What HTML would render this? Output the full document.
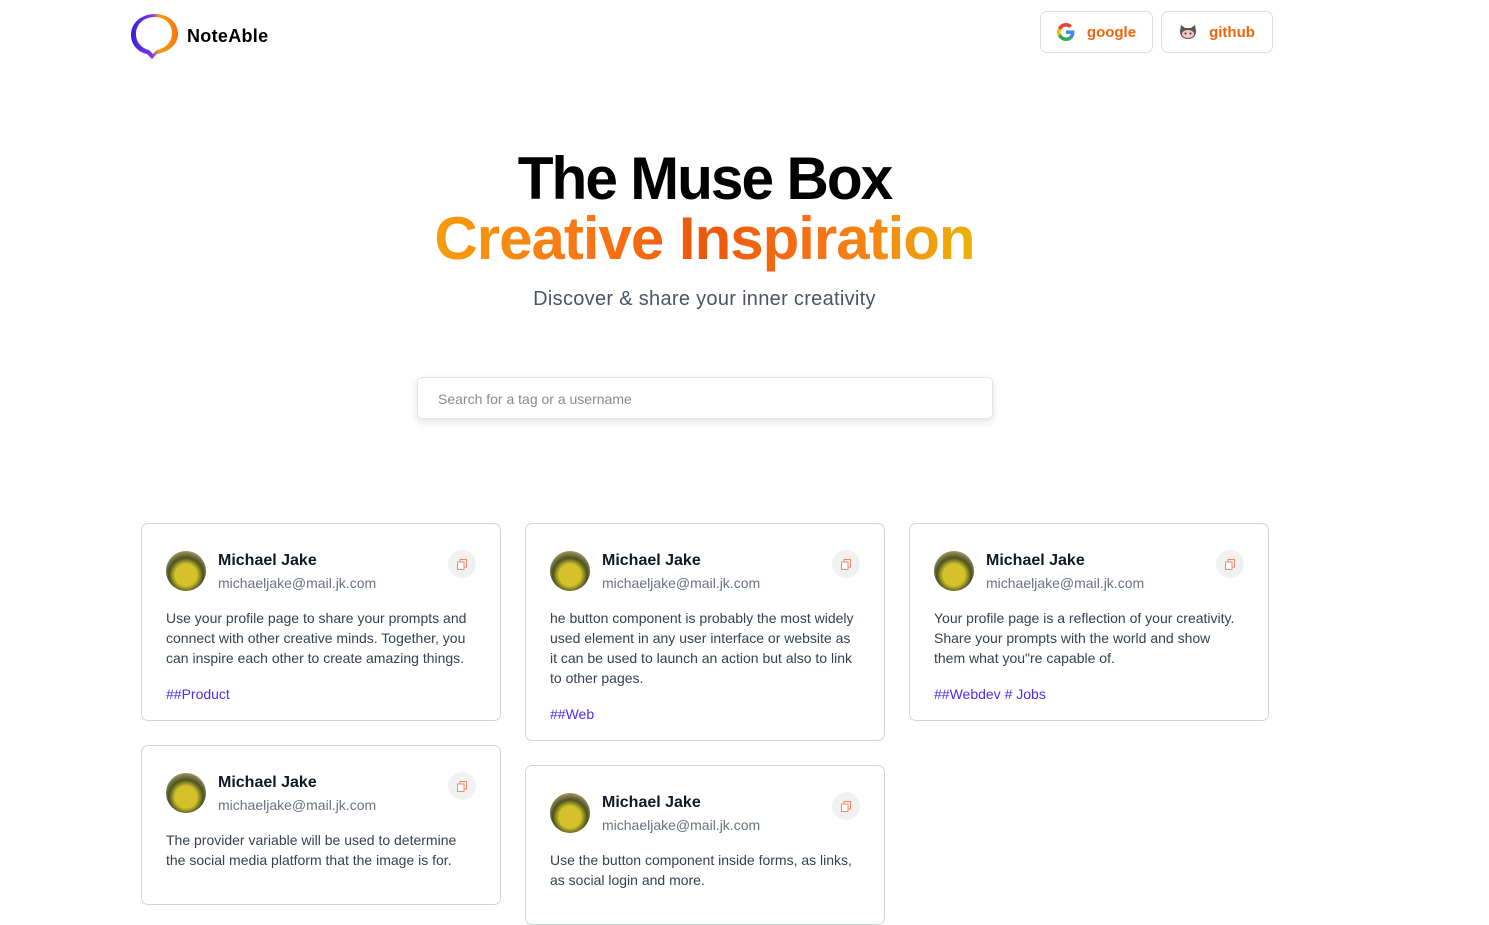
<!DOCTYPE html>
<html><head><meta charset="utf-8"><style>
*{box-sizing:border-box;margin:0;padding:0}
body{width:1489px;height:866px;overflow:hidden;background:#fff;font-family:"Liberation Sans",sans-serif;position:relative}
.logo{position:absolute;left:130px;top:12px}
.brand{position:absolute;left:187px;top:26px;font-weight:bold;font-size:18px;color:#000;letter-spacing:.3px}
.btn{position:absolute;top:11px;height:42px;border:1px solid #ddd;border-radius:7px;display:flex;align-items:center;justify-content:center;gap:12px;font-weight:bold;font-size:15px;color:#f0650a}
h1{position:absolute;left:0;width:1409px;text-align:center;font-size:60px;font-weight:bold}
.t1{top:144px;color:#000;letter-spacing:-2px;transform:scaleX(.976)}
.t2{top:204px;letter-spacing:-1px}
.t2 span{background:linear-gradient(90deg,#f59e0b,#f97316 30%,#ea580c 50%,#f97316 72%,#eab308);-webkit-background-clip:text;background-clip:text;color:transparent}
.sub{position:absolute;top:288px;width:1409px;left:0;text-align:center;font-size:20px;color:#4b5563;letter-spacing:.3px}
.search{position:absolute;left:417px;top:377px;width:576px;height:42px;border:1px solid #e5e5e5;border-radius:5px;box-shadow:0 3px 8px rgba(0,0,0,.12);padding:13px 20px;font-size:14px;color:#8b8b8b}
.card{position:absolute;width:360px;border:1px solid #d1d5db;border-radius:7px;padding:26px 24px 24px;background:#fff}
.hd{display:flex;align-items:center;height:42px;position:relative}
.av{width:40px;height:40px;border-radius:50%;background:radial-gradient(circle at 50% 60%,#d4c12a 0 35%,#4b5320 55%,#b0a070 80%);margin-right:12px}
.nm{font-weight:bold;font-size:16px;color:#111827}
.em{font-size:14px;color:#6b7280;margin-top:5px}
.cp{position:absolute;right:0;top:0;width:28px;height:28px;border-radius:50%;background:#f1f1f1;display:flex;align-items:center;justify-content:center}
.tx{font-size:14px;line-height:20px;color:#374151;margin-top:16px}
.tg{font-size:14px;color:#4f2ee8;margin-top:18px}
</style></head><body>
<svg class="logo" width="50" height="48" viewBox="0 0 50 48"><defs><linearGradient id="g" x1="0" x2="1"><stop offset="0" stop-color="#3b1fd6"/><stop offset=".45" stop-color="#7c3aed"/><stop offset=".6" stop-color="#f59e0b"/><stop offset="1" stop-color="#f97316"/></linearGradient></defs><path d="M25 2C11 2 1 11 1 23c0 10 7 17 16 19l5 5 5-5c11-2 21-9 21-20C48 10 38 2 25 2z" fill="url(#g)"/><path d="M25 5C14 5 6 12 6 22c0 8 5 14 13 16l4 4 4-4c9-2 15-8 15-17C42 12 35 5 25 5z" fill="#fff"/></svg>
<div class="brand">NoteAble</div>
<div class="btn" style="left:1040px;width:113px"><svg width="18" height="18" viewBox="0 0 48 48"><path fill="#EA4335" d="M24 9.5c3.5 0 6.6 1.2 9 3.5l6.7-6.7C35.6 2.4 30.2 0 24 0 14.6 0 6.6 5.4 2.7 13.2l7.8 6.1C12.4 13.7 17.7 9.5 24 9.5z"/><path fill="#4285F4" d="M46.5 24.5c0-1.6-.1-3.1-.4-4.5H24v9h12.7c-.6 3-2.300 5.5-4.8 7.2l7.6 5.9c4.4-4.1 7-10.1 7-17.6z"/><path fill="#FBBC05" d="M10.5 28.7c-.5-1.4-.8-3-.8-4.7s.3-3.2.8-4.7l-7.8-6.1C1 16.6 0 20.2 0 24s1 7.4 2.7 10.8l7.8-6.1z"/><path fill="#34A853" d="M24 48c6.5 0 11.9-2.1 15.9-5.8l-7.6-5.9c-2.1 1.4-4.9 2.3-8.3 2.3-6.3 0-11.6-4.2-13.5-9.9l-7.8 6.1C6.6 42.6 14.6 48 24 48z"/></svg>google</div>
<div class="btn" style="left:1161px;width:112px"><svg width="18" height="16" viewBox="0 0 18 16"><path d="M2 1l4 3h6l4-3 1 6c0 5-3 8-8 8s-8-3-8-8z" fill="#555"/><ellipse cx="9" cy="10" rx="6" ry="4" fill="#f5c6c0"/><circle cx="6.5" cy="9.5" r="1" fill="#333"/><circle cx="11.5" cy="9.5" r="1" fill="#333"/></svg>github</div>
<h1 class="t1">The Muse Box</h1>
<h1 class="t2"><span>Creative Inspiration</span></h1>
<div class="sub">Discover &amp; share your inner creativity</div>
<div class="search">Search for a tag or a username</div>

<div class="card" style="left:141px;top:523px;height:198px"><div class="hd"><div class="av"></div><div><div class="nm">Michael Jake</div><div class="em">michaeljake@mail.jk.com</div></div><div class="cp"><svg width="10" height="11"><rect x="3" y="0.5" width="6.5" height="7.5" fill="none" stroke="#f28a6a"/><rect x="0.5" y="3" width="6.5" height="7.5" fill="#fff" stroke="#f28a6a"/></svg></div></div><div class="tx">Use your profile page to share your prompts and connect with other creative minds. Together, you can inspire each other to create amazing things.</div><div class="tg">##Product</div></div>
<div class="card" style="left:141px;top:745px;height:160px"><div class="hd"><div class="av"></div><div><div class="nm">Michael Jake</div><div class="em">michaeljake@mail.jk.com</div></div><div class="cp"><svg width="10" height="11"><rect x="3" y="0.5" width="6.5" height="7.5" fill="none" stroke="#f28a6a"/><rect x="0.5" y="3" width="6.5" height="7.5" fill="#fff" stroke="#f28a6a"/></svg></div></div><div class="tx">The provider variable will be used to determine the social media platform that the image is for.</div></div>

<div class="card" style="left:525px;top:523px;height:218px"><div class="hd"><div class="av"></div><div><div class="nm">Michael Jake</div><div class="em">michaeljake@mail.jk.com</div></div><div class="cp"><svg width="10" height="11"><rect x="3" y="0.5" width="6.5" height="7.5" fill="none" stroke="#f28a6a"/><rect x="0.5" y="3" width="6.5" height="7.5" fill="#fff" stroke="#f28a6a"/></svg></div></div><div class="tx">he button component is probably the most widely used element in any user interface or website as it can be used to launch an action but also to link to other pages.</div><div class="tg">##Web</div></div>
<div class="card" style="left:525px;top:765px;height:160px"><div class="hd"><div class="av"></div><div><div class="nm">Michael Jake</div><div class="em">michaeljake@mail.jk.com</div></div><div class="cp"><svg width="10" height="11"><rect x="3" y="0.5" width="6.5" height="7.5" fill="none" stroke="#f28a6a"/><rect x="0.5" y="3" width="6.5" height="7.5" fill="#fff" stroke="#f28a6a"/></svg></div></div><div class="tx">Use the button component inside forms, as links, as social login and more.</div></div>

<div class="card" style="left:909px;top:523px;height:198px"><div class="hd"><div class="av"></div><div><div class="nm">Michael Jake</div><div class="em">michaeljake@mail.jk.com</div></div><div class="cp"><svg width="10" height="11"><rect x="3" y="0.5" width="6.5" height="7.5" fill="none" stroke="#f28a6a"/><rect x="0.5" y="3" width="6.5" height="7.5" fill="#fff" stroke="#f28a6a"/></svg></div></div><div class="tx">Your profile page is a reflection of your creativity. Share your prompts with the world and show them what you"re capable of.</div><div class="tg">##Webdev # Jobs</div></div>
</body></html>
